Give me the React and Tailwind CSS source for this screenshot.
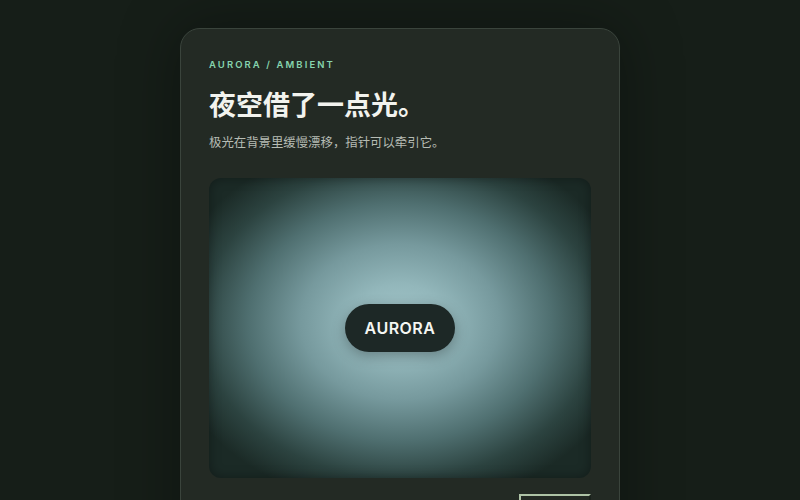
export default function App() {
  return (
    <div
      className="w-[800px] h-[500px] overflow-hidden bg-[#161e18] flex justify-center"
      style={{ fontFamily: 'Inter, "Noto Sans CJK SC", sans-serif' }}
    >
      <div className="mt-[28px] w-[440px] h-[600px] shrink-0 rounded-[20px] border border-[#3a443c] bg-[#232a24] px-[28px] pt-[30px] shadow-[0_0_60px_rgba(0,0,0,0.35)]">
        <div className="text-[9.5px] font-semibold tracking-[0.22em] text-[#86d4ae] leading-[12px]">
          AURORA / AMBIENT
        </div>
        <h1 className="mt-[17px] text-[27px] font-bold leading-[36px] text-[#f2f3ee]">
          夜空借了一点光。
        </h1>
        <p className="mt-[9px] text-[12.4px] leading-[20px] text-[#b6bcb4]">
          极光在背景里缓慢漂移，指针可以牵引它。
        </p>
        <div
          className="mt-[25px] h-[300px] rounded-[12px] flex items-center justify-center shadow-[inset_0_0_12px_rgba(0,0,0,0.35)]"
          style={{
            background:
              'radial-gradient(ellipse 62% 62% at 50% 48%, #a2c5c9 0%, #93b7bb 20%, #76999d 42%, #4f6f70 64%, #2c4340 84%, #1b2a26 100%)',
          }}
        >
          <div className="w-[110px] h-[48px] rounded-full bg-[#1d2826] flex items-center justify-center text-[16px] font-semibold tracking-[0.03em] text-[#f4f6f2] shadow-[0_4px_14px_rgba(0,0,0,0.3)]">
            AURORA
          </div>
        </div>
        <div className="mt-[16px] flex justify-end">
          <div className="w-[72px] h-[34px] border-2 border-[#aec3a6] border-r-[#1a221c] bg-[#232a24]" />
        </div>
      </div>
    </div>
  );
}
